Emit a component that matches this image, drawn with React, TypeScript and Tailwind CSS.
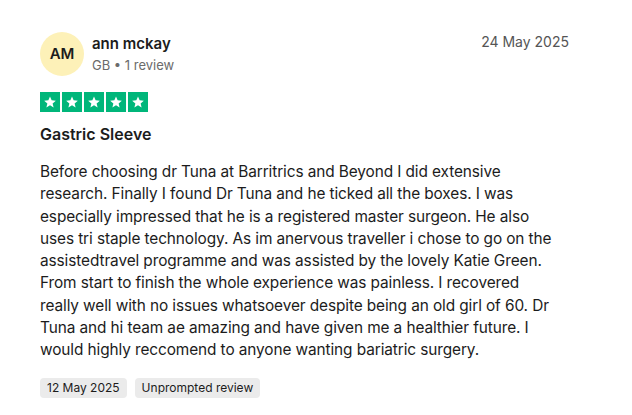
const lines = [
  "Before choosing dr Tuna at Barritrics and Beyond I did extensive",
  "research. Finally I found Dr Tuna and he ticked all the boxes. I was",
  "especially impressed that he is a registered master surgeon. He also",
  "uses tri staple technology. As im anervous traveller i chose to go on the",
  "assistedtravel programme and was assisted by the lovely Katie Green.",
  "From start to finish the whole experience was painless. I recovered",
  "really well with no issues whatsoever despite being an old girl of 60. Dr",
  "Tuna and hi team ae amazing and have given me a healthier future. I",
  "would highly reccomend to anyone wanting bariatric surgery.",
];

function Star() {
  return (
    <div className="flex h-5 w-5 items-center justify-center bg-[#00b67a]">
      <svg viewBox="0 0 24 24" className="h-[14px] w-[14px]" fill="white">
        <path d="M12 2.5l2.8 6.6 7.2.6-5.5 4.7 1.7 7-6.2-3.8-6.2 3.8 1.7-7L2 9.7l7.2-.6z" />
      </svg>
    </div>
  );
}

export default function App() {
  return (
    <div className="min-h-screen bg-white font-['Inter',sans-serif] text-[#1c1c1c]">
      <div className="w-[604px] pl-10 pt-[32px]">
        <div className="flex items-start justify-between pr-[35px]">
          <div className="flex items-center gap-2">
            <div className="flex h-[44px] w-[44px] items-center justify-center rounded-full bg-[#fdf1b8] text-[15px] font-semibold text-[#1c1c1c]">
              AM
            </div>
            <div className="flex flex-col">
              <div className="text-[15px] font-semibold leading-[22px]">ann mckay</div>
              <div className="text-[13px] leading-[20px] text-[#6b6b6b]">GB • 1 review</div>
            </div>
          </div>
          <div className="text-[14px] leading-[20px] text-[#555]">24 May 2025</div>
        </div>

        <div className="mt-[16px] flex gap-[2px]">
          <Star />
          <Star />
          <Star />
          <Star />
          <Star />
        </div>

        <div className="mt-[10px] text-[16px] font-semibold leading-6">Gastric Sleeve</div>

        <p className="mt-[15px] text-[15.4px] leading-[22.3px] tracking-[-0.1px] text-[#1c1c1c]">
          {lines.map((l) => (
            <span key={l} className="block whitespace-nowrap">
              {l}
            </span>
          ))}
        </p>

        <div className="mt-[16px] flex gap-2">
          <span className="rounded-[4px] bg-[#ebebeb] px-[7px] text-[12px] leading-[20px]">12 May 2025</span>
          <span className="rounded-[4px] bg-[#ebebeb] px-[7px] text-[12px] leading-[20px]">Unprompted review</span>
        </div>
      </div>
    </div>
  );
}
